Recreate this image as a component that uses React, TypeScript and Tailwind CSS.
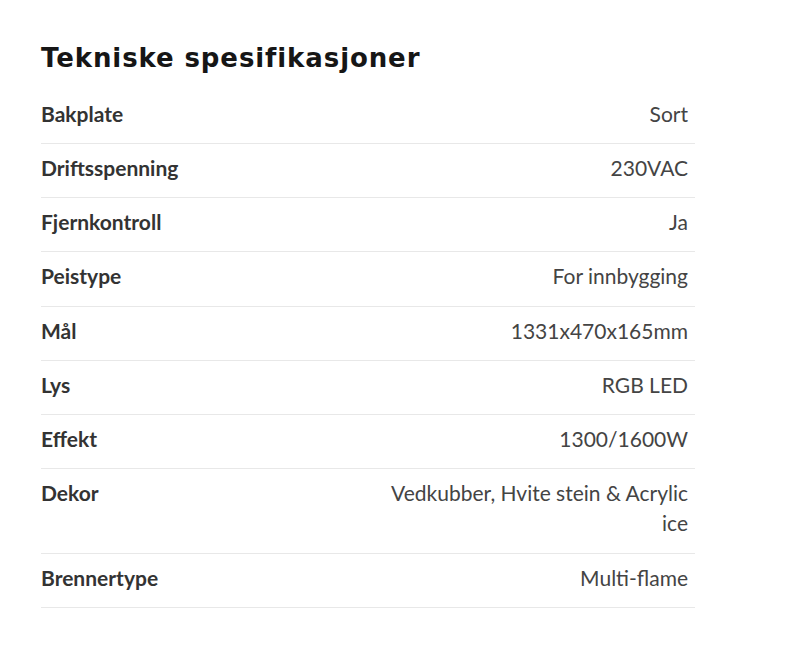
const specs: [string, string][] = [
  ['Bakplate', 'Sort'],
  ['Driftsspenning', '230VAC'],
  ['Fjernkontroll', 'Ja'],
  ['Peistype', 'For innbygging'],
  ['Mål', '1331x470x165mm'],
  ['Lys', 'RGB LED'],
  ['Effekt', '1300/1600W'],
  ['Dekor', 'Vedkubber, Hvite stein & Acrylic ice'],
  ['Brennertype', 'Multi-flame'],
]

export default function App() {
  return (
    <div className="min-h-[649px] bg-white pl-[41px] pt-[37.5px]" style={{ fontFamily: 'Lato, sans-serif' }}>
      <div className="w-[654px]">
        <h2
          className="mb-[12px] text-[26px] font-bold leading-[40px] tracking-[0.9px] text-[#161616]"
          style={{ fontFamily: '"DejaVu Sans", sans-serif' }}
        >
          Tekniske spesifikasjoner
        </h2>
        <table className="w-full table-fixed text-[21px] leading-[30px]">
          <tbody>
            {specs.map(([label, value]) => (
              <tr key={label} className="border-b border-[#e8e8e8]">
                <td className="pt-[9px] pb-[14.25px] pr-2 align-top font-bold text-[#333]">{label}</td>
                <td className="pt-[9px] pb-[14.25px] pl-2 pr-[7px] text-right align-top text-[#444]">{value}</td>
              </tr>
            ))}
          </tbody>
        </table>
      </div>
    </div>
  )
}
